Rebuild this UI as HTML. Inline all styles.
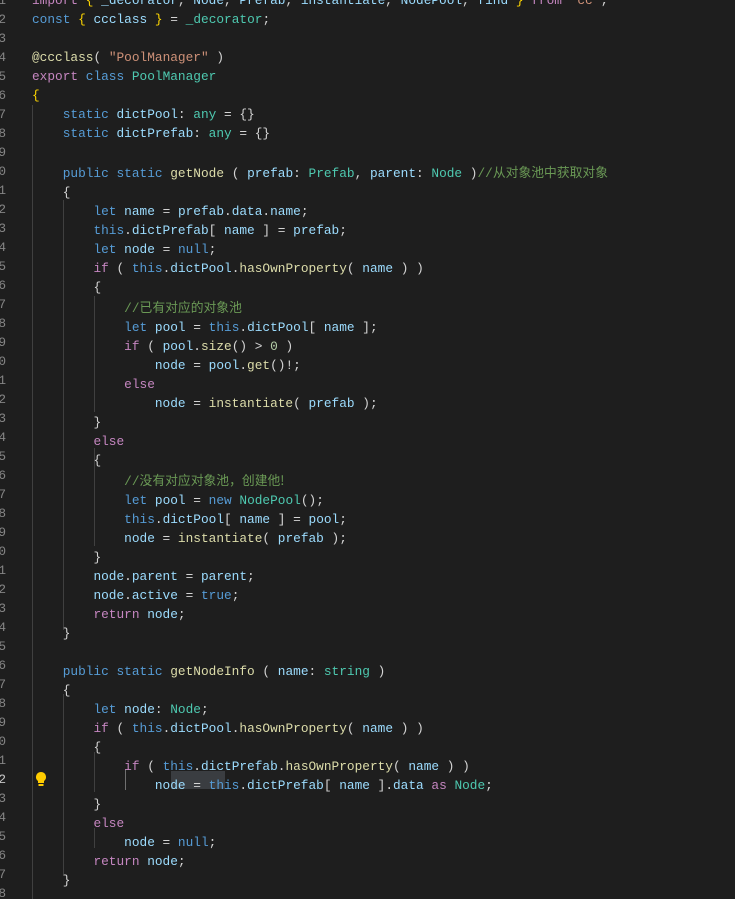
<!DOCTYPE html>
<html><head><meta charset="utf-8"><style>
html,body{margin:0;padding:0;background:#1e1e1e;width:735px;height:899px;overflow:hidden;position:relative}
.ln{position:absolute;left:-60px;width:66px;text-align:right;font:12.8px/19px "Liberation Mono",monospace;color:#858585;white-space:pre}
.code{position:absolute;left:32px;top:-9.5px;font:12.8px/19px "Liberation Mono","Noto Sans CJK SC",monospace;color:#d4d4d4;white-space:pre}
.ln{top:-9.5px}
.k{color:#569cd6}.c{color:#c586c0}.t{color:#4ec9b0}.v{color:#9cdcfe}.f{color:#dcdcaa}.s{color:#ce9178}.m{color:#6a9955}.n{color:#b5cea8}
.y{color:#d4d4d4}.p{color:#d4d4d4}.b{color:#d4d4d4}.gold{color:#ffd700}
.g{position:absolute;width:1px;background:#404040}
.cj{font-family:"Noto Sans CJK SC",sans-serif}
</style></head><body>
<div class="g" style="left:32px;top:105px;height:794px"></div>
<div class="g" style="left:63px;top:200px;height:430px"></div>
<div class="g" style="left:63px;top:694px;height:182px"></div>
<div class="g" style="left:94px;top:296px;height:116px"></div>
<div class="g" style="left:94px;top:448px;height:98px"></div>
<div class="g" style="left:94px;top:752px;height:40px"></div>
<div class="g" style="left:94px;top:828px;height:20px"></div>
<div class="g" style="left:125px;top:770px;height:20px;background:#707070"></div>
<div style="position:absolute;left:171px;top:771px;width:54px;height:18px;background:#3a3d41"></div>
<svg style="position:absolute;left:35px;top:771px" width="12" height="16" viewBox="0 0 12 16"><path d="M6 1a5 5 0 0 0-3 9v2h6v-2a5 5 0 0 0-3-9z" fill="#ffcc00"/><rect x="3.5" y="13" width="5" height="2" fill="#ffcc00"/></svg>
<div class="ln">1
2
3
4
5
6
7
8
9
10
11
12
13
14
15
16
17
18
19
20
21
22
23
24
25
26
27
28
29
30
31
32
33
34
35
36
37
38
39
40
41
<span style="color:#c6c6c6">42</span>
43
44
45
46
47
48</div>
<div class="code"><span class="c">import</span> <span class="gold">{</span> <span class="v">_decorator</span>, <span class="v">Node</span>, <span class="v">Prefab</span>, <span class="v">instantiate</span>, <span class="v">NodePool</span>, <span class="v">find</span> <span class="gold">}</span> <span class="c">from</span> <span class="s">"cc"</span>;
<span class="k">const</span> <span class="gold">{</span> <span class="v">ccclass</span> <span class="gold">}</span> = <span class="t">_decorator</span>;

<span class="f">@ccclass</span><span class="y">(</span> <span class="s">"PoolManager"</span> <span class="y">)</span>
<span class="c">export</span> <span class="k">class</span> <span class="t">PoolManager</span>
<span class="gold">{</span>
    <span class="k">static</span> <span class="v">dictPool</span>: <span class="t">any</span> = <span class="p">{}</span>
    <span class="k">static</span> <span class="v">dictPrefab</span>: <span class="t">any</span> = <span class="p">{}</span>

    <span class="k">public</span> <span class="k">static</span> <span class="f">getNode</span> <span class="p">(</span> <span class="v">prefab</span>: <span class="t">Prefab</span>, <span class="v">parent</span>: <span class="t">Node</span> <span class="p">)</span><span class="m">//<span class="cj">从对象池中获取对象</span></span>
    <span class="p">{</span>
        <span class="k">let</span> <span class="v">name</span> = <span class="v">prefab</span>.<span class="v">data</span>.<span class="v">name</span>;
        <span class="k">this</span>.<span class="v">dictPrefab</span><span class="b">[</span> <span class="v">name</span> <span class="b">]</span> = <span class="v">prefab</span>;
        <span class="k">let</span> <span class="v">node</span> = <span class="k">null</span>;
        <span class="c">if</span> <span class="b">(</span> <span class="k">this</span>.<span class="v">dictPool</span>.<span class="f">hasOwnProperty</span><span class="y">(</span> <span class="v">name</span> <span class="y">)</span> <span class="b">)</span>
        <span class="b">{</span>
            <span class="m">//<span class="cj">已有对应的对象池</span></span>
            <span class="k">let</span> <span class="v">pool</span> = <span class="k">this</span>.<span class="v">dictPool</span><span class="y">[</span> <span class="v">name</span> <span class="y">]</span>;
            <span class="c">if</span> <span class="y">(</span> <span class="v">pool</span>.<span class="f">size</span><span class="p">()</span> &gt; <span class="n">0</span> <span class="y">)</span>
                <span class="v">node</span> = <span class="v">pool</span>.<span class="f">get</span><span class="y">()</span>!;
            <span class="c">else</span>
                <span class="v">node</span> = <span class="f">instantiate</span><span class="y">(</span> <span class="v">prefab</span> <span class="y">)</span>;
        <span class="b">}</span>
        <span class="c">else</span>
        <span class="b">{</span>
            <span class="m">//<span class="cj">没有对应对象池，创建他!</span></span>
            <span class="k">let</span> <span class="v">pool</span> = <span class="k">new</span> <span class="t">NodePool</span><span class="y">()</span>;
            <span class="k">this</span>.<span class="v">dictPool</span><span class="y">[</span> <span class="v">name</span> <span class="y">]</span> = <span class="v">pool</span>;
            <span class="v">node</span> = <span class="f">instantiate</span><span class="y">(</span> <span class="v">prefab</span> <span class="y">)</span>;
        <span class="b">}</span>
        <span class="v">node</span>.<span class="v">parent</span> = <span class="v">parent</span>;
        <span class="v">node</span>.<span class="v">active</span> = <span class="k">true</span>;
        <span class="c">return</span> <span class="v">node</span>;
    <span class="p">}</span>

    <span class="k">public</span> <span class="k">static</span> <span class="f">getNodeInfo</span> <span class="p">(</span> <span class="v">name</span>: <span class="t">string</span> <span class="p">)</span>
    <span class="p">{</span>
        <span class="k">let</span> <span class="v">node</span>: <span class="t">Node</span>;
        <span class="c">if</span> <span class="b">(</span> <span class="k">this</span>.<span class="v">dictPool</span>.<span class="f">hasOwnProperty</span><span class="y">(</span> <span class="v">name</span> <span class="y">)</span> <span class="b">)</span>
        <span class="b">{</span>
            <span class="c">if</span> <span class="y">(</span> <span class="k">this</span>.<span class="v">dictPrefab</span>.<span class="f">hasOwnProperty</span><span class="p">(</span> <span class="v">name</span> <span class="p">)</span> <span class="y">)</span>
                <span class="v">node</span> = <span class="k">this</span>.<span class="v">dictPrefab</span><span class="y">[</span> <span class="v">name</span> <span class="y">]</span>.<span class="v">data</span> <span class="c">as</span> <span class="t">Node</span>;
        <span class="b">}</span>
        <span class="c">else</span>
            <span class="v">node</span> = <span class="k">null</span>;
        <span class="c">return</span> <span class="v">node</span>;
    <span class="p">}</span>
</div>
</body></html>
